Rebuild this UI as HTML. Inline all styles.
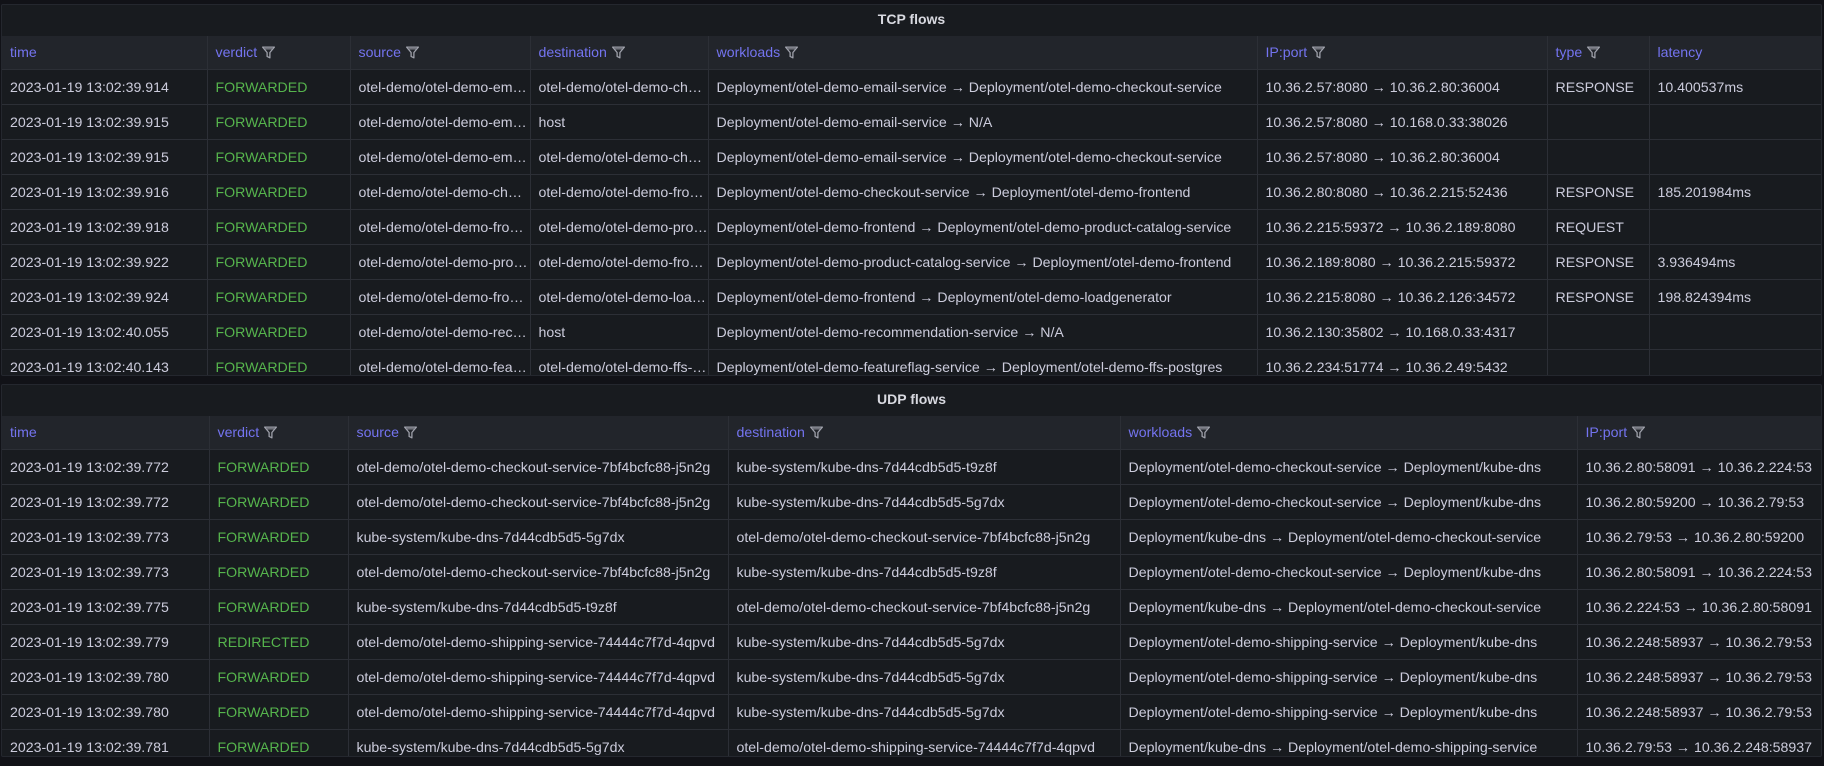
<!DOCTYPE html>
<html><head><meta charset="utf-8"><style>
*{box-sizing:border-box;margin:0;padding:0}
body{width:1824px;height:766px;background:#111217;font-family:"Liberation Sans",Roboto,sans-serif;font-size:14.15px;color:#ccccdc;overflow:hidden;position:relative}
.panel{position:absolute;left:1px;width:1821px;background:#181b1f;border:1px solid #24272e;border-radius:2px;overflow:hidden}
.title{height:31px;line-height:29px;text-align:center;font-weight:bold;font-size:14px;color:#d8d9e0}
table{border-collapse:collapse;table-layout:fixed;width:1820px}
th{height:33px;background:#22252b;color:#7474f0;font-weight:normal;text-align:left;padding-left:8px;border-right:1px solid #2c2f36;white-space:nowrap}
td{height:35px;padding-left:8px;border-right:1px solid #2c2f36;border-top:1px solid #2c2f36;white-space:nowrap;overflow:hidden;text-overflow:ellipsis}
th:last-child,td:last-child{border-right:none}
.g{color:#56b54d}
.f{display:inline-block;width:15px;height:15px;vertical-align:-3px;margin-left:4px}
</style></head><body>
<svg width="0" height="0" style="position:absolute"><symbol id="fl" viewBox="0 0 14 14"><path d="M1.5 2h11l-4.2 5v5l-2.6-1.3V7z" fill="none" stroke="#9fa1ab" stroke-width="1.2" stroke-linejoin="round"/><path d="M3 3.6h8" stroke="#9fa1ab" stroke-width="1"/></symbol></svg>

<div class="panel" style="top:4px;height:372px">
<div class="title">TCP flows</div>
<table>
<colgroup><col style="width:205px"><col style="width:143px"><col style="width:180px"><col style="width:178px"><col style="width:549px"><col style="width:290px"><col style="width:102px"><col style="width:173px"></colgroup>
<tr><th>time</th><th>verdict<svg class="f"><use href="#fl"/></svg></th><th>source<svg class="f"><use href="#fl"/></svg></th><th>destination<svg class="f"><use href="#fl"/></svg></th><th>workloads<svg class="f"><use href="#fl"/></svg></th><th>IP:port<svg class="f"><use href="#fl"/></svg></th><th>type<svg class="f"><use href="#fl"/></svg></th><th>latency</th></tr>
<tr><td>2023-01-19 13:02:39.914</td><td class="g">FORWARDED</td><td>otel-demo/otel-demo-email-service</td><td>otel-demo/otel-demo-checkout-service</td><td>Deployment/otel-demo-email-service → Deployment/otel-demo-checkout-service</td><td>10.36.2.57:8080 → 10.36.2.80:36004</td><td>RESPONSE</td><td>10.400537ms</td></tr>
<tr><td>2023-01-19 13:02:39.915</td><td class="g">FORWARDED</td><td>otel-demo/otel-demo-email-service</td><td>host</td><td>Deployment/otel-demo-email-service → N/A</td><td>10.36.2.57:8080 → 10.168.0.33:38026</td><td></td><td></td></tr>
<tr><td>2023-01-19 13:02:39.915</td><td class="g">FORWARDED</td><td>otel-demo/otel-demo-email-service</td><td>otel-demo/otel-demo-checkout-service</td><td>Deployment/otel-demo-email-service → Deployment/otel-demo-checkout-service</td><td>10.36.2.57:8080 → 10.36.2.80:36004</td><td></td><td></td></tr>
<tr><td>2023-01-19 13:02:39.916</td><td class="g">FORWARDED</td><td>otel-demo/otel-demo-checkout</td><td>otel-demo/otel-demo-frontend</td><td>Deployment/otel-demo-checkout-service → Deployment/otel-demo-frontend</td><td>10.36.2.80:8080 → 10.36.2.215:52436</td><td>RESPONSE</td><td>185.201984ms</td></tr>
<tr><td>2023-01-19 13:02:39.918</td><td class="g">FORWARDED</td><td>otel-demo/otel-demo-frontend</td><td>otel-demo/otel-demo-product</td><td>Deployment/otel-demo-frontend → Deployment/otel-demo-product-catalog-service</td><td>10.36.2.215:59372 → 10.36.2.189:8080</td><td>REQUEST</td><td></td></tr>
<tr><td>2023-01-19 13:02:39.922</td><td class="g">FORWARDED</td><td>otel-demo/otel-demo-product</td><td>otel-demo/otel-demo-frontend</td><td>Deployment/otel-demo-product-catalog-service → Deployment/otel-demo-frontend</td><td>10.36.2.189:8080 → 10.36.2.215:59372</td><td>RESPONSE</td><td>3.936494ms</td></tr>
<tr><td>2023-01-19 13:02:39.924</td><td class="g">FORWARDED</td><td>otel-demo/otel-demo-frontend</td><td>otel-demo/otel-demo-loadgenerator</td><td>Deployment/otel-demo-frontend → Deployment/otel-demo-loadgenerator</td><td>10.36.2.215:8080 → 10.36.2.126:34572</td><td>RESPONSE</td><td>198.824394ms</td></tr>
<tr><td>2023-01-19 13:02:40.055</td><td class="g">FORWARDED</td><td>otel-demo/otel-demo-recommendation</td><td>host</td><td>Deployment/otel-demo-recommendation-service → N/A</td><td>10.36.2.130:35802 → 10.168.0.33:4317</td><td></td><td></td></tr>
<tr><td>2023-01-19 13:02:40.143</td><td class="g">FORWARDED</td><td>otel-demo/otel-demo-featureflag</td><td>otel-demo/otel-demo-ffs-postgres</td><td>Deployment/otel-demo-featureflag-service → Deployment/otel-demo-ffs-postgres</td><td>10.36.2.234:51774 → 10.36.2.49:5432</td><td></td><td></td></tr>
</table></div>

<div class="panel" style="top:384px;height:373px">
<div class="title">UDP flows</div>
<table>
<colgroup><col style="width:207px"><col style="width:139px"><col style="width:380px"><col style="width:392px"><col style="width:457px"><col style="width:245px"></colgroup>
<tr><th>time</th><th>verdict<svg class="f"><use href="#fl"/></svg></th><th>source<svg class="f"><use href="#fl"/></svg></th><th>destination<svg class="f"><use href="#fl"/></svg></th><th>workloads<svg class="f"><use href="#fl"/></svg></th><th>IP:port<svg class="f"><use href="#fl"/></svg></th></tr>
<tr><td>2023-01-19 13:02:39.772</td><td class="g">FORWARDED</td><td>otel-demo/otel-demo-checkout-service-7bf4bcfc88-j5n2g</td><td>kube-system/kube-dns-7d44cdb5d5-t9z8f</td><td>Deployment/otel-demo-checkout-service → Deployment/kube-dns</td><td>10.36.2.80:58091 → 10.36.2.224:53</td></tr>
<tr><td>2023-01-19 13:02:39.772</td><td class="g">FORWARDED</td><td>otel-demo/otel-demo-checkout-service-7bf4bcfc88-j5n2g</td><td>kube-system/kube-dns-7d44cdb5d5-5g7dx</td><td>Deployment/otel-demo-checkout-service → Deployment/kube-dns</td><td>10.36.2.80:59200 → 10.36.2.79:53</td></tr>
<tr><td>2023-01-19 13:02:39.773</td><td class="g">FORWARDED</td><td>kube-system/kube-dns-7d44cdb5d5-5g7dx</td><td>otel-demo/otel-demo-checkout-service-7bf4bcfc88-j5n2g</td><td>Deployment/kube-dns → Deployment/otel-demo-checkout-service</td><td>10.36.2.79:53 → 10.36.2.80:59200</td></tr>
<tr><td>2023-01-19 13:02:39.773</td><td class="g">FORWARDED</td><td>otel-demo/otel-demo-checkout-service-7bf4bcfc88-j5n2g</td><td>kube-system/kube-dns-7d44cdb5d5-t9z8f</td><td>Deployment/otel-demo-checkout-service → Deployment/kube-dns</td><td>10.36.2.80:58091 → 10.36.2.224:53</td></tr>
<tr><td>2023-01-19 13:02:39.775</td><td class="g">FORWARDED</td><td>kube-system/kube-dns-7d44cdb5d5-t9z8f</td><td>otel-demo/otel-demo-checkout-service-7bf4bcfc88-j5n2g</td><td>Deployment/kube-dns → Deployment/otel-demo-checkout-service</td><td>10.36.2.224:53 → 10.36.2.80:58091</td></tr>
<tr><td>2023-01-19 13:02:39.779</td><td class="g">REDIRECTED</td><td>otel-demo/otel-demo-shipping-service-74444c7f7d-4qpvd</td><td>kube-system/kube-dns-7d44cdb5d5-5g7dx</td><td>Deployment/otel-demo-shipping-service → Deployment/kube-dns</td><td>10.36.2.248:58937 → 10.36.2.79:53</td></tr>
<tr><td>2023-01-19 13:02:39.780</td><td class="g">FORWARDED</td><td>otel-demo/otel-demo-shipping-service-74444c7f7d-4qpvd</td><td>kube-system/kube-dns-7d44cdb5d5-5g7dx</td><td>Deployment/otel-demo-shipping-service → Deployment/kube-dns</td><td>10.36.2.248:58937 → 10.36.2.79:53</td></tr>
<tr><td>2023-01-19 13:02:39.780</td><td class="g">FORWARDED</td><td>otel-demo/otel-demo-shipping-service-74444c7f7d-4qpvd</td><td>kube-system/kube-dns-7d44cdb5d5-5g7dx</td><td>Deployment/otel-demo-shipping-service → Deployment/kube-dns</td><td>10.36.2.248:58937 → 10.36.2.79:53</td></tr>
<tr><td>2023-01-19 13:02:39.781</td><td class="g">FORWARDED</td><td>kube-system/kube-dns-7d44cdb5d5-5g7dx</td><td>otel-demo/otel-demo-shipping-service-74444c7f7d-4qpvd</td><td>Deployment/kube-dns → Deployment/otel-demo-shipping-service</td><td>10.36.2.79:53 → 10.36.2.248:58937</td></tr>
</table></div>
</body></html>
